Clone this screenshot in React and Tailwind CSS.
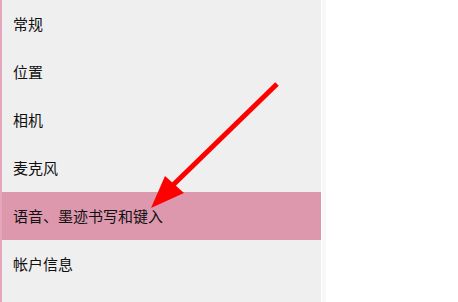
export default function App() {
  const items = ["常规", "位置", "相机", "麦克风", "语音、墨迹书写和键入", "帐户信息"];
  return (
    <div className="relative w-[458px] h-[302px] bg-white overflow-hidden" style={{ fontFamily: '"Microsoft YaHei", "Noto Sans CJK SC", sans-serif' }}>
      <div className="w-[321px] h-full bg-[#efefef] border-l-2 border-[#e6a7bd] pt-0">
        {items.map((t, i) => (
          <div
            key={t}
            className={
              "h-[48px] flex items-center pl-[11px] text-[15px] text-[#111] " +
              (i === 4 ? "bg-[#dd98ae]" : "")
            }
          >
            {t}
          </div>
        ))}
      </div>
      <div className="absolute top-0 left-[322px] w-[4px] h-full bg-[#f8f8f8]" />
      <svg className="absolute left-0 top-0" width="458" height="302" viewBox="0 0 458 302">
        <line x1="277" y1="84" x2="172" y2="186" stroke="#ff0000" strokeWidth="5" strokeLinecap="butt" />
        <polygon points="151,208 165,176 184,193" fill="#ff0000" />
      </svg>
    </div>
  );
}
